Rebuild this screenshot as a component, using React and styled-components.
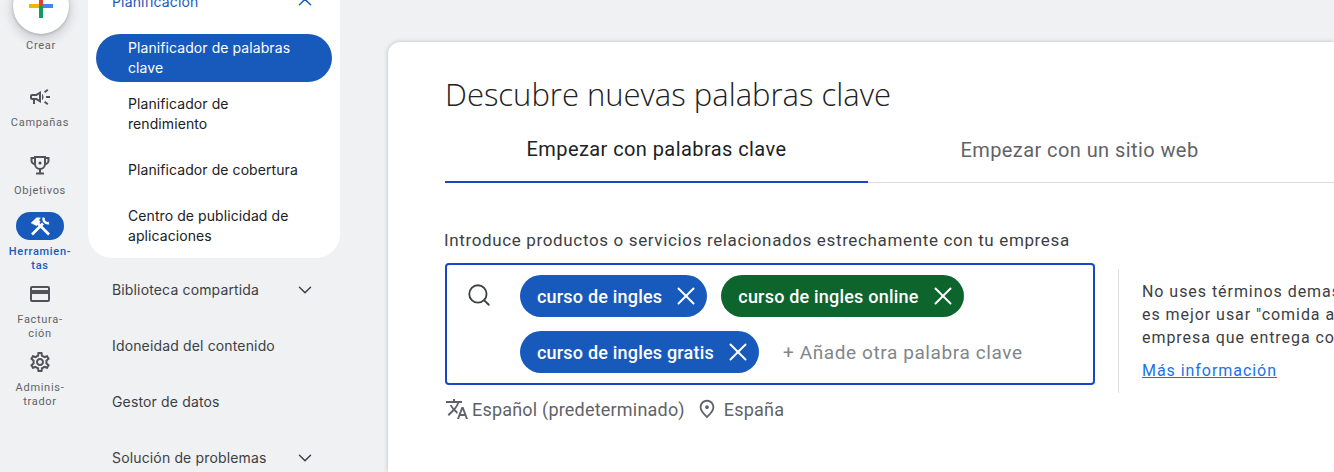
import React from 'react'
import styled, { createGlobalStyle } from 'styled-components'
import { ChevronDown, ChevronUp, Search, X } from 'lucide-react'
import {
  MdOutlineCampaign,
  MdOutlineCreditCard,
  MdOutlinePlace,
  MdOutlineSettings,
  MdOutlineTranslate,
} from 'react-icons/md'

const GlobalStyle = createGlobalStyle`
  html, body {
    margin: 0;
    padding: 0;
    width: 1334px;
    height: 472px;
    overflow: hidden;
    background: #eff1f3;
    font-family: Roboto, "Liberation Sans", sans-serif;
  }
`

const Page = styled.div`
  display: flex;
  align-items: flex-start;
  width: 1334px;
  height: 472px;
  overflow: hidden;
`

const Rail = styled.aside`
  flex: 0 0 88px;
  margin-top: -22px;
  margin-left: -4px;
  margin-right: 4px;
  display: flex;
  flex-direction: column;
  align-items: center;
`

const Fab = styled.div`
  width: 56px;
  height: 56px;
  margin-left: 2px;
  border-radius: 50%;
  background: #fff;
  display: flex;
  align-items: center;
  justify-content: center;
  box-shadow: 0 1px 3px rgba(60, 64, 67, 0.3), 0 4px 8px 3px rgba(60, 64, 67, 0.15);
`

const RailItem = styled.div`
  display: flex;
  flex-direction: column;
  align-items: center;
  margin-top: ${(p) => p.$gap}px;
`

const RailIcon = styled.div`
  display: flex;
  align-items: center;
  justify-content: center;
  width: ${(p) => (p.$active ? '48px' : '24px')};
  height: ${(p) => (p.$active ? '28px' : '24px')};
  border-radius: 14px;
  background: ${(p) => (p.$active ? '#185abc' : 'transparent')};
  color: ${(p) => (p.$active ? '#fff' : '#50545a')};
`

const RailLabel = styled.div`
  margin-top: ${(p) => (p.$active ? '5px' : '7px')};
  font-size: 11px;
  line-height: 14px;
  letter-spacing: 0.7px;
  text-align: center;
  color: ${(p) => (p.$active ? '#185abc' : '#5f6368')};
  font-weight: ${(p) => (p.$active ? 500 : 400)};
`

const FabLabel = styled(RailLabel)`
  margin-top: 5px;
  margin-left: 2px;
`

const Nav = styled.nav`
  flex: 0 0 252px;
  margin-top: -26px;
  font-family: Inter, Roboto, sans-serif;
  font-size: 14px;
  line-height: 20px;
  letter-spacing: 0.08px;
`

const NavPanel = styled.div`
  background: #fff;
  border-radius: 0 0 24px 24px;
  padding-bottom: 8px;
  margin-bottom: 4px;
`

const NavGroup = styled.div`
  height: 56px;
  padding: 0 24px;
  display: flex;
  align-items: center;
  justify-content: space-between;
  letter-spacing: 0.15px;
  color: ${(p) => (p.$open ? '#185abc' : '#3c4043')};
`

const NavList = styled.div`
  margin-top: 4px;
  padding: 0 8px;
  display: flex;
  flex-direction: column;
  gap: 8px;
`

const NavItem = styled.div`
  height: 48px;
  padding: 0 32px;
  display: flex;
  align-items: center;
  border-radius: 24px;
  background: ${(p) => (p.$active ? '#185abc' : 'transparent')};
  color: ${(p) => (p.$active ? '#fff' : '#202124')};
`

const Card = styled.main`
  flex: 1;
  height: 430px;
  margin: 42px 0 0 48px;
  padding: 32px 0 0 57px;
  box-sizing: border-box;
  background: #fff;
  border-radius: 12px 0 0 0;
  box-shadow: 0 0 4px rgba(60, 64, 67, 0.3);
  overflow: hidden;
`

const Title = styled.h1`
  margin: 0;
  font-family: "Open Sans", sans-serif;
  font-size: 31px;
  line-height: 40px;
  font-weight: 300;
  color: #202124;
`

const Tabs = styled.div`
  display: flex;
  height: 68px;
  margin-top: 1px;
  box-sizing: border-box;
  border-bottom: 1px solid #dadce0;
`

const Tab = styled.div`
  flex: 0 0 423px;
  height: 68px;
  padding-top: 2px;
  box-sizing: border-box;
  display: flex;
  align-items: center;
  justify-content: center;
  font-size: 20px;
  letter-spacing: 0.42px;
  color: ${(p) => (p.$active ? '#202124' : '#5f6368')};
  border-bottom: ${(p) => (p.$active ? '2px solid #1a47c8' : 'none')};
`

const FieldLabel = styled.div`
  margin-top: 45px;
  margin-left: -1px;
  font-size: 17px;
  line-height: 24px;
  letter-spacing: 0.64px;
  color: #3c4043;
`

const FieldRow = styled.div`
  margin-top: 11px;
  display: flex;
  align-items: flex-start;
`

const FieldColumn = styled.div`
  flex: 0 0 650px;
`

const KeywordBox = styled.div`
  height: 122px;
  box-sizing: border-box;
  border: 2px solid #1a47c8;
  border-radius: 4px;
  padding: 10px 8px 10px 19px;
  display: flex;
  align-items: flex-start;
  gap: 28px;
`

const SearchSlot = styled.div`
  flex: 0 0 24px;
  height: 42px;
  margin-top: -1px;
  display: flex;
  align-items: center;
  color: #3c4043;
`

const Chips = styled.div`
  flex: 1;
  display: flex;
  flex-wrap: wrap;
  gap: 14px;
`

const Chip = styled.div`
  height: 42px;
  box-sizing: border-box;
  padding: 0 6px 0 17px;
  display: flex;
  align-items: center;
  gap: 9px;
  border-radius: 21px;
  background: ${(p) => (p.$green ? '#0d652d' : '#185abc')};
  color: #fff;
  font-size: 18px;
  font-weight: 500;
  letter-spacing: 0.2px;
`

const AddKeyword = styled.div`
  height: 42px;
  margin-left: 10px;
  display: flex;
  align-items: center;
  font-size: 19px;
  letter-spacing: 0.6px;
  color: #80868b;
`

const MetaRow = styled.div`
  margin-top: 12px;
  height: 24px;
  display: flex;
  align-items: center;
  font-size: 18px;
  letter-spacing: 0.2px;
  color: #5f6368;
`

const MetaText = styled.span`
  margin: 0 ${(p) => p.$after || 0}px 0 ${(p) => p.$before}px;
`

const Hint = styled.aside`
  margin: 6px 0 0 23px;
  height: 124px;
  box-sizing: border-box;
  padding: 11px 0 0 23px;
  border-left: 1px solid #dadce0;
  font-size: 16px;
  line-height: 23px;
  letter-spacing: 0.95px;
  color: #3c4043;
  white-space: nowrap;
`

const HintLink = styled.a`
  display: block;
  margin-top: 10px;
  color: #1a73e8;
  text-decoration: underline;
`

const Plus = () => (
  <svg width="24" height="24" viewBox="0 0 24 24">
    <rect x="0" y="10" width="12" height="4" fill="#f4b400" />
    <rect x="12" y="10" width="12" height="4" fill="#4285f4" />
    <rect x="10" y="0" width="4" height="12" fill="#db4437" />
    <rect x="10" y="12" width="4" height="12" fill="#0f9d58" />
  </svg>
)

const Trophy = () => (
  <svg width="24" height="24" viewBox="0 0 24 24" fill="none" stroke="currentColor" strokeWidth="2">
    <path d="M7 4h10v7a5 5 0 0 1-10 0z" />
    <path d="M7 5H3.5v2.5A3.5 3.5 0 0 0 7 11M17 5h3.5v2.5A3.5 3.5 0 0 1 17 11" />
    <path d="M12 16v4M8 20.5h8" />
    <circle cx="12" cy="10" r="1.6" fill="currentColor" stroke="none" />
  </svg>
)

// crossed hammer and wrench of the active rail entry
const Tools = () => (
  <svg width="24" height="24" viewBox="0 0 24 24" fill="none" stroke="currentColor">
    <path d="M21 20.5 10 9.5" strokeWidth="2.6" />
    <path d="M3 9 8.5 3.8h4l-1.6 2.2 1.4 1.8-3.6 4z" fill="currentColor" strokeWidth="0.4" />
    <path d="M4 20.5 15 9.5" strokeWidth="2.6" />
    <path d="M15.8 3.6a4.2 4.2 0 0 0 5.2 5.4" strokeWidth="2.4" />
  </svg>
)

const chipLabels = [
  { text: 'curso de ingles' },
  { text: 'curso de ingles online', green: true },
  { text: 'curso de ingles gratis' },
]

export default function App() {
  return (
    <Page>
      <GlobalStyle />
      <Rail>
        <Fab>
          <Plus />
        </Fab>
        <FabLabel>Crear</FabLabel>
        <RailItem $gap={32}>
          <RailIcon>
            <MdOutlineCampaign size={24} />
          </RailIcon>
          <RailLabel>Campañas</RailLabel>
        </RailItem>
        <RailItem $gap={23}>
          <RailIcon>
            <Trophy />
          </RailIcon>
          <RailLabel>Objetivos</RailLabel>
        </RailItem>
        <RailItem $gap={14}>
          <RailIcon $active>
            <Tools />
          </RailIcon>
          <RailLabel $active>
            Herramien-
            <br />
            tas
          </RailLabel>
        </RailItem>
        <RailItem $gap={9}>
          <RailIcon>
            <MdOutlineCreditCard size={24} />
          </RailIcon>
          <RailLabel>
            Factura-
            <br />
            ción
          </RailLabel>
        </RailItem>
        <RailItem $gap={9}>
          <RailIcon>
            <MdOutlineSettings size={24} />
          </RailIcon>
          <RailLabel>
            Adminis-
            <br />
            trador
          </RailLabel>
        </RailItem>
      </Rail>

      <Nav>
        <NavPanel>
          <NavGroup $open>
            Planificación
            <ChevronUp size={22} strokeWidth={1.6} />
          </NavGroup>
          <NavList>
            <NavItem $active>Planificador de palabras clave</NavItem>
            <NavItem>Planificador de rendimiento</NavItem>
            <NavItem>Planificador de cobertura</NavItem>
            <NavItem>Centro de publicidad de aplicaciones</NavItem>
          </NavList>
        </NavPanel>
        <NavGroup>
          Biblioteca compartida
          <ChevronDown size={22} strokeWidth={1.6} />
        </NavGroup>
        <NavGroup>Idoneidad del contenido</NavGroup>
        <NavGroup>Gestor de datos</NavGroup>
        <NavGroup>
          Solución de problemas
          <ChevronDown size={22} strokeWidth={1.6} />
        </NavGroup>
      </Nav>

      <Card>
        <Title>Descubre nuevas palabras clave</Title>
        <Tabs>
          <Tab $active>Empezar con palabras clave</Tab>
          <Tab>Empezar con un sitio web</Tab>
        </Tabs>
        <FieldLabel>Introduce productos o servicios relacionados estrechamente con tu empresa</FieldLabel>
        <FieldRow>
          <FieldColumn>
            <KeywordBox>
              <SearchSlot>
                <Search size={26} strokeWidth={1.7} />
              </SearchSlot>
              <Chips>
                {chipLabels.map((chip) => (
                  <Chip key={chip.text} $green={chip.green}>
                    {chip.text}
                    <X size={30} strokeWidth={1.6} />
                  </Chip>
                ))}
                <AddKeyword>+ Añade otra palabra clave</AddKeyword>
              </Chips>
            </KeywordBox>
            <MetaRow>
              <MdOutlineTranslate size={24} />
              <MetaText $before={3} $after={11}>Español (predeterminado)</MetaText>
              <MdOutlinePlace size={22} />
              <MetaText $before={6}>España</MetaText>
            </MetaRow>
          </FieldColumn>
          <Hint>
            No uses términos demasiado generales; por ejemplo,
            <br />
            es mejor usar "comida a domicilio" que "comida" si tienes una
            <br />
            empresa que entrega comida a domicilio.
            <HintLink>Más información</HintLink>
          </Hint>
        </FieldRow>
      </Card>
    </Page>
  )
}
